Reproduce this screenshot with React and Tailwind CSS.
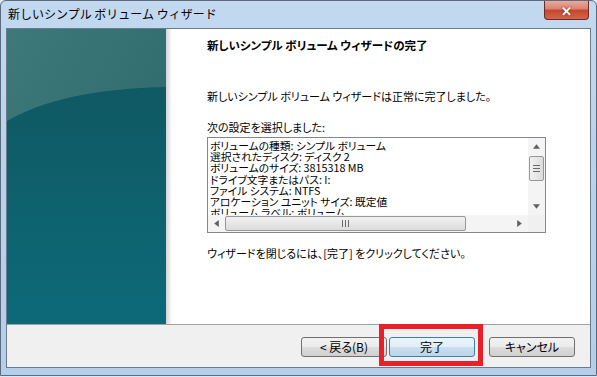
import { useState } from "react";

// Win7 "new simple volume" wizard - final page.
const settings = [
  "ボリュームの種類: シンプル ボリューム",
  "選択されたディスク: ディスク 2",
  "ボリュームのサイズ: 3815318 MB",
  "ドライブ文字またはパス: I:",
  "ファイル システム: NTFS",
  "アロケーション ユニット サイズ: 既定値",
  "ボリューム ラベル: ボリューム",
];

function Button({ children, focused }) {
  return (
    <button
      className={
        "flex h-[20px] w-[86px] items-center justify-center rounded-[3px] border text-[12px] text-black " +
        (focused
          ? "border-[#3c7fb1] bg-[linear-gradient(#eaf4fb_0%,#e2eef8_50%,#c9def0_51%,#bcd5ea_100%)]"
          : "border-[#707070] bg-[linear-gradient(#f2f2f2_0%,#ebebeb_50%,#dddddd_51%,#cfcfcf_100%)]")
      }
    >
      {children}
    </button>
  );
}

function TealPanel() {
  return (
    <svg width="159" height="296" viewBox="0 0 159 296" className="block">
      <defs>
        <linearGradient id="top" x1="0" y1="0" x2="1" y2="1">
          <stop offset="0" stopColor="#3d7979" />
          <stop offset="1" stopColor="#2a666b" />
        </linearGradient>
        <linearGradient id="low" x1="0" y1="0" x2="0" y2="1">
          <stop offset="0" stopColor="#0f5963" />
          <stop offset="1" stopColor="#0d6a79" />
        </linearGradient>
      </defs>
      <rect width="159" height="296" fill="url(#top)" />
      <path d="M0 92 Q55 60 159 58 L159 296 L0 296 Z" fill="url(#low)" />
    </svg>
  );
}

function ScrollArrow({ dir }) {
  const pts = {
    up: "0,4 3,0 6,4",
    down: "0,0 3,4 6,0",
    left: "4,0 0,3 4,6",
    right: "0,0 4,3 0,6",
  }[dir];
  const vertical = dir === "up" || dir === "down";
  return (
    <svg width={vertical ? 7 : 5} height={vertical ? 5 : 7} viewBox={vertical ? "0 0 6 4" : "0 0 4 6"}>
      <polygon points={pts} fill="#606060" />
    </svg>
  );
}

export default function App() {
  const [lines] = useState(settings);

  return (
    <div className="relative h-[377px] w-[597px] overflow-hidden bg-[#dfe8f1] font-['Noto_Sans_CJK_JP','Liberation_Sans',sans-serif]">
      <div className="flex h-[376px] flex-col rounded-t-[6px] border border-[#5b6b7e] bg-[linear-gradient(180deg,#c2d9f0_0%,#bad3ec_40%,#b5cfea_100%)]">
        {/* title bar */}
        <div className="flex h-[27px] items-start justify-between pl-[7px] pr-[7px]">
          <span className="mt-[5px] text-[12px] leading-[16px] text-black">新しいシンプル ボリューム ウィザード</span>
          <div className="flex h-[19px] w-[45px] items-center justify-center rounded-b-[4px] border border-t-0 border-[#6d2a22] bg-[linear-gradient(#e9a99b_0%,#d7826f_45%,#c6452f_50%,#d2664a_100%)]">
            <span className="text-[13px] font-bold leading-none text-white [text-shadow:0_0_2px_#5a1a10]">✕</span>
          </div>
        </div>

        {/* client area */}
        <div className="mx-[5px] mb-[7px] flex flex-1 flex-col border border-[#6b7a8c] bg-[#f0f0f0] [font-feature-settings:'palt']">
          <div className="flex h-[295px] bg-white">
            <TealPanel />
            <div className="w-[6px] bg-[linear-gradient(90deg,#d4d4d4,#ffffff)]" />
            <div className="flex flex-1 flex-col pl-[35px] text-[11px] leading-[14px] text-black">
              <div className="mt-[9px] text-[11.5px] font-bold">新しいシンプル ボリューム ウィザードの完了</div>
              <div className="mt-[37px]">新しいシンプル ボリューム ウィザードは正常に完了しました。</div>
              <div className="mt-[17px]">次の設定を選択しました:</div>

              <div className="mt-[3px] flex h-[96px] w-[339px] flex-col border border-[#828790] bg-white">
                <div className="flex flex-1 overflow-hidden">
                  <div className="flex-1 overflow-hidden pl-[2px] pt-[2px] text-[10.75px] leading-[11.2px] whitespace-nowrap">
                    {lines.map((l) => (
                      <div key={l}>{l}</div>
                    ))}
                  </div>
                  <div className="flex w-[17px] flex-col items-center bg-[#f4f4f4]">
                    <div className="flex h-[17px] items-center justify-center"><ScrollArrow dir="up" /></div>
                    <div className="mt-[1px] flex h-[25px] w-[15px] flex-col items-center justify-center gap-[2px] rounded-[2px] border border-[#979797] bg-[linear-gradient(90deg,#f1f1f1,#dcdcdc)]">
                      <div className="h-px w-[7px] bg-[#6a6a6a]" />
                      <div className="h-px w-[7px] bg-[#6a6a6a]" />
                      <div className="h-px w-[7px] bg-[#6a6a6a]" />
                    </div>
                    <div className="flex-1" />
                    <div className="flex h-[17px] items-center justify-center"><ScrollArrow dir="down" /></div>
                  </div>
                </div>
                <div className="flex h-[17px] bg-[#f4f4f4]">
                  <div className="flex w-[17px] items-center justify-center"><ScrollArrow dir="left" /></div>
                  <div className="my-[1px] flex w-[241px] items-center justify-center gap-[2px] rounded-[2px] border border-[#979797] bg-[linear-gradient(#f1f1f1,#dcdcdc)]">
                    <div className="h-[7px] w-px bg-[#6a6a6a]" />
                    <div className="h-[7px] w-px bg-[#6a6a6a]" />
                    <div className="h-[7px] w-px bg-[#6a6a6a]" />
                  </div>
                  <div className="flex-1" />
                  <div className="flex w-[17px] items-center justify-center"><ScrollArrow dir="right" /></div>
                  <div className="w-[17px] bg-[#f0f0f0]" />
                </div>
              </div>

              <div className="mt-[13px]">ウィザードを閉じるには、[完了] をクリックしてください。</div>
            </div>
          </div>
          <div className="h-px bg-[#a0a0a0]" />
          <div className="flex flex-1 items-start pl-[294px] pt-[12px]">
            <Button>&lt; 戻る(B)</Button>
            <div className="w-[2px]" />
            <Button focused>完了</Button>
            <div className="w-[14px]" />
            <Button>キャンセル</Button>
          </div>
        </div>
      </div>

      {/* red highlight around the finish button */}
      <div className="absolute left-[379px] top-[324px] h-[42px] w-[104px] border-[5px] border-[#e8202a]" />
    </div>
  );
}
